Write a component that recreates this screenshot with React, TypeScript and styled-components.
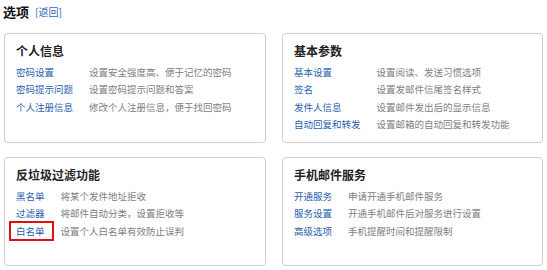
import React from 'react';
import styled, { createGlobalStyle } from 'styled-components';

const GlobalStyle = createGlobalStyle`
  html, body {
    margin: 0;
    padding: 0;
    background: #fff;
  }
  body {
    font-family: "Noto Sans CJK SC", "Liberation Sans", sans-serif;
  }
  * { box-sizing: border-box; }
`;

type Item = { name: string; desc: string; marked?: boolean };
type Section = { title: string; items: Item[] };

const sections: Section[] = [
  {
    title: '个人信息',
    items: [
      { name: '密码设置', desc: '设置安全强度高、便于记忆的密码' },
      { name: '密码提示问题', desc: '设置密码提示问题和答案' },
      { name: '个人注册信息', desc: '修改个人注册信息，便于找回密码' },
    ],
  },
  {
    title: '基本参数',
    items: [
      { name: '基本设置', desc: '设置阅读、发送习惯选项' },
      { name: '签名', desc: '设置发邮件信尾签名样式' },
      { name: '发件人信息', desc: '设置邮件发出后的显示信息' },
      { name: '自动回复和转发', desc: '设置邮箱的自动回复和转发功能' },
    ],
  },
  {
    title: '反垃圾过滤功能',
    items: [
      { name: '黑名单', desc: '将某个发件地址拒收' },
      { name: '过滤器', desc: '将邮件自动分类，设置拒收等' },
      { name: '白名单', desc: '设置个人白名单有效防止误判', marked: true },
    ],
  },
  {
    title: '手机邮件服务',
    items: [
      { name: '开通服务', desc: '申请开通手机邮件服务' },
      { name: '服务设置', desc: '开通手机邮件后对服务进行设置' },
      { name: '高级选项', desc: '手机提醒时间和提醒限制' },
    ],
  },
];

export default function App() {
  return (
    <>
      <GlobalStyle />
      <Page>
        <Header>
          <PageTitle>选项</PageTitle>
          <BackLink href="#">[返回]</BackLink>
        </Header>
        <Grid>
          {sections.map((s) => (
            <Card key={s.title}>
              <CardTitle>{s.title}</CardTitle>
              <List>
                {s.items.map((it) => (
                  <React.Fragment key={it.name}>
                    <ItemLink href="#" $marked={it.marked}>{it.name}</ItemLink>
                    <ItemDesc>{it.desc}</ItemDesc>
                  </React.Fragment>
                ))}
              </List>
            </Card>
          ))}
        </Grid>
      </Page>
    </>
  );
}

const Page = styled.div`
  width: 547px;
  height: 270px;
  padding: 0 4px 0 4px;
  background: #fff;
`;

const Header = styled.div`
  height: 33px;
  display: flex;
  align-items: flex-start;
  gap: 6px;
  padding-top: 3px;
  padding-left: 0;
  margin-left: -1px;
`;

const PageTitle = styled.h1`
  margin: 0;
  font-size: 13px;
  line-height: 17px;
  font-weight: bold;
  color: #111;
`;

const BackLink = styled.a`
  font-size: 10px;
  line-height: 17px;
  color: #2a6ab8;
  text-decoration: none;
`;

const Grid = styled.div`
  display: grid;
  grid-template-columns: 262px 261px;
  column-gap: 16px;
  row-gap: 14px;
`;

const Card = styled.div`
  min-height: 109px;
  border: 1px solid #cfcfcf;
  border-radius: 4px;
  padding: 9px 12px 9px 11px;
  background: #fff;
`;

const CardTitle = styled.h2`
  margin: 0 0 4px 0;
  font-size: 12px;
  line-height: 16px;
  font-weight: bold;
  color: #222;
`;

const List = styled.div`
  display: grid;
  grid-template-columns: auto 1fr;
  column-gap: 16px;
  grid-auto-rows: 17.5px;
  align-items: center;
  font-size: 9.5px;
`;

const ItemLink = styled.a<{ $marked?: boolean }>`
  position: relative;
  color: #1f5fae;
  text-decoration: none;
  white-space: nowrap;
  justify-self: start;

  &::after {
    content: '';
    display: ${(p) => (p.$marked ? 'block' : 'none')};
    position: absolute;
    left: -7px;
    right: -9px;
    top: -3px;
    bottom: -3px;
    border: 2px solid #dd1111;
  }
`;

const ItemDesc = styled.span`
  color: #808080;
  white-space: nowrap;
`;
